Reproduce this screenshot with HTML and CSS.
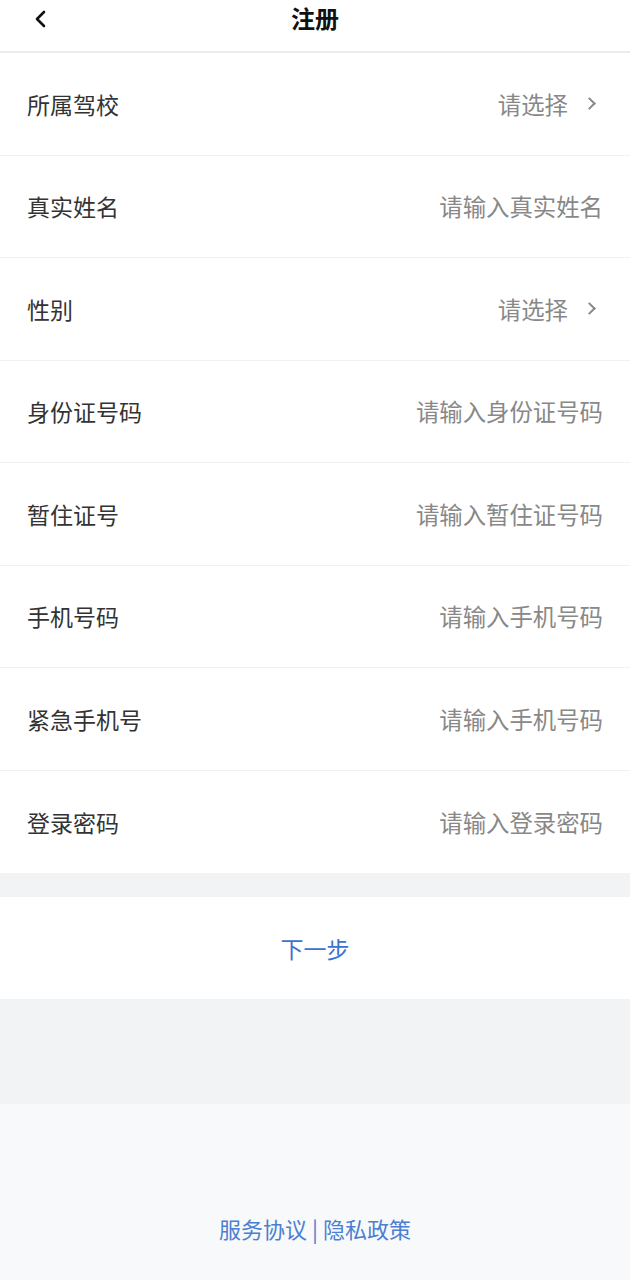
FILE: index.html
```html
<!DOCTYPE html>
<html lang="zh-CN">
<head>
  <meta charset="UTF-8">
  <meta name="viewport" content="width=device-width, initial-scale=1">
  <title>注册</title>
  <link rel="stylesheet" href="styles.css">
</head>
<body>
  <div class="page">
    <header class="nav">
      <span class="back">
        <svg width="14" height="18" viewBox="0 0 14 18"><path d="M11 2 L4 9 L11 16" fill="none" stroke="#111" stroke-width="2.6" stroke-linecap="round" stroke-linejoin="round"/></svg>
      </span>
      <h1 class="title">注册</h1>
    </header>

    <div class="form">
      <div class="row">
        <span class="label">所属驾校</span>
        <span class="value">请选择<i class="arrow"></i></span>
      </div>
      <div class="row">
        <span class="label">真实姓名</span>
        <span class="value">请输入真实姓名</span>
      </div>
      <div class="row">
        <span class="label">性别</span>
        <span class="value">请选择<i class="arrow"></i></span>
      </div>
      <div class="row">
        <span class="label">身份证号码</span>
        <span class="value">请输入身份证号码</span>
      </div>
      <div class="row">
        <span class="label">暂住证号</span>
        <span class="value">请输入暂住证号码</span>
      </div>
      <div class="row">
        <span class="label">手机号码</span>
        <span class="value">请输入手机号码</span>
      </div>
      <div class="row">
        <span class="label">紧急手机号</span>
        <span class="value">请输入手机号码</span>
      </div>
      <div class="row">
        <span class="label">登录密码</span>
        <span class="value">请输入登录密码</span>
      </div>
    </div>

    <div class="next">下一步</div>

    <div class="spacer"></div>

    <footer class="footer">
      <span class="links">服务协议 | 隐私政策</span>
    </footer>
  </div>
</body>
</html>
```

FILE: styles.css
```css
body {
  margin: 0;
  padding: 0;
  background-color: #f8f9fa;
  font-family: "Noto Sans CJK SC", "Noto Sans", sans-serif;
}

.page {
  display: flex;
  flex-direction: column;
  min-height: 1280px;
  background-color: #f1f3f5;
}

.nav {
  position: relative;
  height: 51px;
  background: #fff;
  border-bottom: 2px solid #ececec;
  display: flex;
  align-items: flex-start;
  justify-content: center;
}

.back {
  position: absolute;
  left: 33px;
  top: 9px;
}

.title {
  margin: 0;
  font-size: 24px;
  line-height: 36px;
  font-weight: bold;
  color: #111;
}

.form {
  background: #fff;
  margin-bottom: 24px;
}

.row {
  height: 101.5px;
  padding: 0 27px;
  display: flex;
  align-items: center;
  justify-content: space-between;
  border-bottom: 1px solid #f0f0f0;
}

.row:last-child {
  border-bottom: none;
  height: 102px;
}

.label {
  font-size: 23px;
  color: #333;
}

.value {
  font-size: 23.4px;
  color: #888;
  display: flex;
  align-items: center;
}

.arrow {
  width: 7px;
  height: 7px;
  border-top: 2px solid #888;
  border-right: 2px solid #888;
  transform: rotate(45deg);
  margin-left: 17px;
  margin-right: 9px;
}

.next {
  height: 102px;
  background: #fff;
  display: flex;
  align-items: center;
  justify-content: center;
  font-size: 23px;
  color: #3b72d0;
}

.spacer {
  height: 105px;
}

.footer {
  flex: 1;
  background: #f8f9fa;
  display: flex;
  justify-content: center;
  padding-top: 108px;
}

.links {
  font-size: 22px;
  color: #4a7fd2;
}
```
